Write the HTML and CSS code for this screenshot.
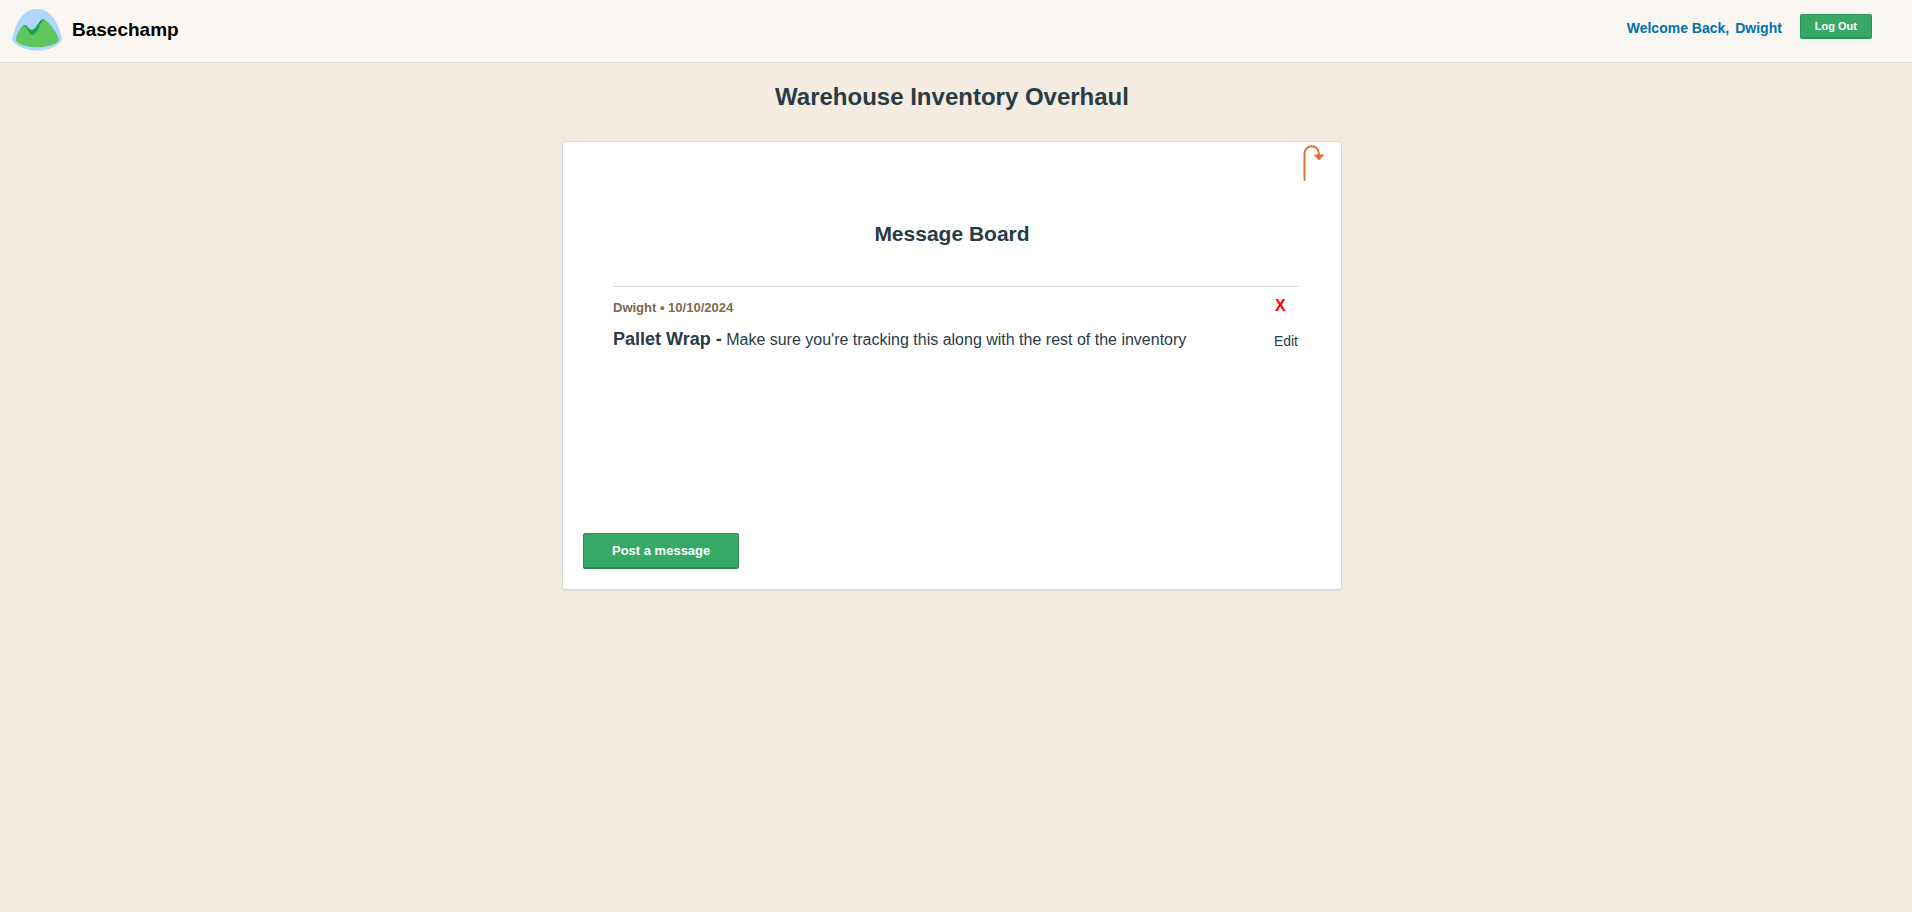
FILE: index.html
```html
<!DOCTYPE html>
<html lang="en">
<head>
<meta charset="utf-8">
<title>Basechamp</title>
<link rel="stylesheet" href="styles.css">
</head>
<body>
<header class="nav">
  <a class="brand" href="#">
    <svg class="brand-logo" viewBox="0 0 50 42" aria-hidden="true">
      <path fill="#add8fc" d="M25 0C13 0 5 10 1 26C-0.500 31 0 32 3 34.500C9 39.500 17 41.500 25 41.500S41 39.500 47 34.500C50 32 50.500 31 49 26C45 10 37 0 25 0Z"/>
      <path fill="#5ec65c" d="M4 28.500C6 24 8 19 11 16.500C14 14 17 23 20 23C24 23 28 10 32 10.500C36 12 43 21 46.500 28.500C47.500 31 46 33 43.500 34.500C33 39.500 17 39.500 7 34.500C4 33 3 31 4 28.500Z"/>
      <path fill="#1ba548" d="M11.500 16.500C14 15 15 17.500 17 19.500C19 21.500 21 21 23 19C27 14 29 9 32 10.500C29 13 27 19 24.500 23C22 27 19 27 17 23.500C15 19 14 17 11.500 16.500Z"/>
    </svg>
    <span class="brand-name">Basechamp</span>
  </a>
  <div class="session">
    <span class="greeting"><span>Welcome Back,</span><span>Dwight</span></span>
    <button class="button button-small" type="button">Log Out</button>
  </div>
</header>
<main class="page">
  <h1 class="project-title">Warehouse Inventory Overhaul</h1>
  <section class="card">
    <a class="back" href="#" aria-label="Back to project">
      <svg class="back-icon" viewBox="0 0 22 38" aria-hidden="true">
        <path d="M1.500 35V8.500A7.200 7.200 0 0 1 15.900 8.500V11" fill="none" stroke="#e96d37" stroke-width="2" stroke-linecap="round"/>
        <path d="M10.500 9.500H21.500L16 15.500Z" fill="#e96d37"/>
      </svg>
    </a>
    <h2 class="board-title">Message Board</h2>
    <ul class="messages">
      <li class="message">
        <div class="message-body">
          <p class="meta">Dwight • 10/10/2024</p>
          <p class="text"><strong class="subject">Pallet Wrap -</strong> Make sure you're tracking this along with the rest of the inventory</p>
        </div>
        <div class="actions">
          <button class="delete" type="button" aria-label="Delete message">X</button>
          <a class="edit" href="#">Edit</a>
        </div>
      </li>
    </ul>
    <button class="button button-large" type="button">Post a message</button>
  </section>
</main>
</body>
</html>
```
FILE: styles.css
```css
* {
  box-sizing: border-box;
}

body {
  margin: 0;
  min-height: 100vh;
  background: linear-gradient(#f4ece0 760px, #f3eae0 760px);
  color: #283c46;
  font-family: "Liberation Sans", Arial, sans-serif;
  font-size: 16px;
}

a {
  color: inherit;
  text-decoration: none;
}

.nav {
  display: flex;
  justify-content: space-between;
  align-items: flex-start;
  padding: 9px 40px 11px 12px;
  background: #faf7f2;
  border-bottom: 1px solid #dbdbd5;
}

.brand {
  display: flex;
  align-items: center;
  gap: 10px;
  color: #000;
}

.brand-logo {
  display: block;
  width: 50px;
  height: 42px;
}

.brand-name {
  font-size: 19px;
  font-weight: 700;
  line-height: 24px;
}

.session {
  display: flex;
  align-items: center;
  gap: 18px;
  padding-top: 5px;
}

.greeting {
  display: flex;
  gap: 6px;
  color: #0071ad;
  font-size: 14px;
  font-weight: 700;
  line-height: 16px;
  padding-top: 2px;
}

.button {
  border: 1px solid #2b9155;
  border-bottom-width: 2px;
  border-radius: 2px;
  background: #37a966;
  color: #fff;
  font-family: inherit;
  font-weight: 700;
  cursor: pointer;
}

.button-small {
  padding: 4px 14px;
  font-size: 11px;
  line-height: 14px;
}

.button-large {
  align-self: flex-start;
  margin: auto 0 0 20px;
  padding: 9px 28px;
  font-size: 13px;
  line-height: 15px;
}

.page {
  display: flex;
  flex-direction: column;
  align-items: center;
  padding: 20px 8px 40px 0;
}

.project-title {
  margin: 0 0 30px;
  font-size: 24px;
  line-height: 28px;
}

.card {
  display: flex;
  flex-direction: column;
  width: 100%;
  max-width: 780px;
  min-height: 450px;
  padding-bottom: 20px;
  background: #fff;
  border: 1px solid #d9d9d7;
  border-bottom-width: 2px;
  border-radius: 4px;
}

.back {
  align-self: flex-end;
  margin: 3px 16px 0 0;
}

.back-icon {
  display: block;
  width: 22px;
  height: 38px;
}

.board-title {
  margin: 39px 0 40px;
  font-size: 21px;
  line-height: 24px;
  text-align: center;
}

.messages {
  margin: 0 43px 0 50px;
  padding: 0;
  list-style: none;
}

.message {
  display: flex;
  justify-content: space-between;
  gap: 16px;
  padding-top: 12px;
  border-top: 1px solid #d9d9d7;
}

.message-body,
.actions {
  display: flex;
  flex-direction: column;
}

.meta {
  margin: 0 0 12px;
  color: #7f6a4d;
  font-size: 13px;
  font-weight: 700;
  line-height: 18px;
}

.text {
  margin: 0;
  line-height: 20px;
}

.subject {
  font-size: 18px;
}

.delete {
  align-self: flex-start;
  margin: 0 0 18px;
  padding: 0 1px;
  border: 0;
  background: none;
  color: #f00;
  font-family: inherit;
  font-size: 16px;
  font-weight: 700;
  line-height: 14px;
  cursor: pointer;
}

.edit {
  font-size: 14px;
  line-height: 20px;
}
```
